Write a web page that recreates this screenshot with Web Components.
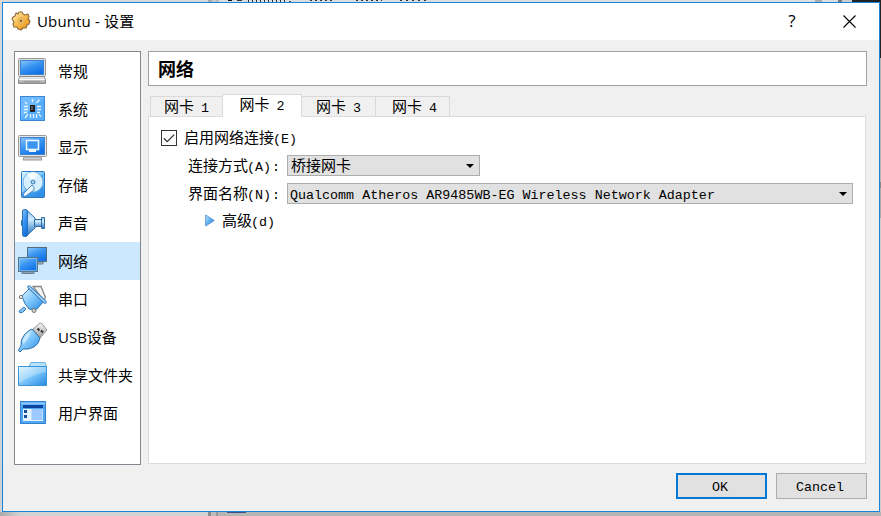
<!DOCTYPE html>
<html lang="zh-CN">
<head>
<meta charset="utf-8">
<title>Ubuntu - 设置</title>
<style>
  html, body { margin: 0; height: 100%; overflow: hidden; }
  body { font-family: "Liberation Mono", "Noto Sans CJK SC", monospace; color: #000; }
</style>
</head>
<body>

<template id="desk-top">
  <style>
    :host {
      display: flex;
      flex-direction: column;
      box-sizing: border-box;
      width: 881px;
      height: 516px;
      padding: 2px 1px 4px 2px;
      background:
        linear-gradient(#111, #111) 228px 0 / 4px 1px no-repeat,
        linear-gradient(#333, #333) 237px 0 / 5px 1px no-repeat,
        repeating-linear-gradient(90deg, #333 0 1px, transparent 1px 4px) 248px 0 / 38px 2px no-repeat,
        linear-gradient(#555, #555) 289px 1px / 2px 1px no-repeat,
        repeating-linear-gradient(90deg, #333 0 2px, transparent 2px 5px) 310px 0 / 25px 1px no-repeat,
        repeating-linear-gradient(90deg, #333 0 2px, transparent 2px 5px) 356px 0 / 26px 1px no-repeat,
        repeating-linear-gradient(90deg, #333 0 2px, transparent 2px 6px) 400px 0 / 27px 1px no-repeat,
        linear-gradient(90deg, #d8d8d8 208px, #aaa 208px 212px, #c8c8c8 212px 216px, #bbb 216px 219px, #dedede 219px 815px, #aaa 815px 822px, #ddd 822px 838px, #777 838px 842px, #ccc 842px 852px, #222 852px) 0 0 / 100% 2px no-repeat,
        linear-gradient(#45507f, #45507f) 227px 512px / 19px 1px no-repeat,
        linear-gradient(90deg, #aaa, #d2d2d2 20px 208px, #8c8c8c 208px 211px, #bbb 211px 216px, #999 216px 218px, #b4b4b4 218px) 0 512px / 100% 4px no-repeat,
        linear-gradient(#222 58px, #b5b5b5 58px 182px, #888 182px 188px, #aaa 188px 218px, #ccc 218px) 880px 0 / 1px 100% no-repeat,
        linear-gradient(#d8d8d8, #d0d0d0);
    }
  </style>
  <slot></slot>
</template>

<template id="settings-window">
  <style>
    :host {
      display: flex;
      flex-direction: column;
      box-sizing: border-box;
      height: 510px;
      border: 1px solid #1883d7;
      background: #f0f0f0;
    }
    header {
      display: flex;
      align-items: center;
      box-sizing: border-box;
      height: 37px;
      padding: 0 23px 1px 8px;
      background: #fff;
      font: 15px/20px "Open Sans", "Noto Sans CJK SC", sans-serif;
    }
    header svg { flex: none; }
    .title { margin-left: 6px; flex: 1; white-space: pre; letter-spacing: .15px; }
    .help { width: 10px; margin-right: 46px; font-size: 17px; text-align: center; }
    .body { display: flex; gap: 7px; padding: 11px 12px 0 11px; }
    .main { flex: 1; min-width: 0; display: flex; flex-direction: column; }
    footer { display: flex; justify-content: flex-end; gap: 9px; padding: 8px 12px 0; }
  </style>
  <header>
    <svg width="20" height="20" viewBox="0 0 20 20">
      <defs><linearGradient id="gear" x2="1" y2="1"><stop stop-color="#fff0b8"/><stop offset=".5" stop-color="#f8bb4c"/><stop offset="1" stop-color="#e08a08"/></linearGradient></defs>
      <path d="M8 1 11 1 12 3 14 4 17 3 18 6 17 8 19 10 18 13 16 14 15 17 12 17 10 19 7 18 6 16 3 16 2 13 3 11 1 8 2 6 4 5 5 2 7 3Z" fill="url(#gear)" stroke="#8f6a3c" stroke-width="1.1" stroke-linejoin="round"/>
      <circle cx="10" cy="10" r="3.2" fill="#f8c870" stroke="#e8ab4c"/>
      <circle cx="10" cy="10" r="1.4" fill="#8a6a3a"/>
    </svg>
    <span class="title"><slot name="title"></slot></span>
    <span class="help">?</span>
    <svg width="13" height="13" viewBox="0 0 13 13"><path d="M.5.5l12 12M12.5.5l-12 12" stroke="#000" stroke-width="1.1"/></svg>
  </header>
  <div class="body">
    <slot name="nav"></slot>
    <div class="main"><slot></slot></div>
  </div>
  <footer><slot name="buttons"></slot></footer>
</template>

<template id="nav-list">
  <style>
    :host {
      display: flex;
      flex-direction: column;
      flex: none;
      box-sizing: border-box;
      width: 127px;
      height: 414px;
      border: 1px solid #828790;
      background: #fff;
    }
  </style>
  <slot></slot>
</template>

<template id="nav-item">
  <style>
    :host {
      display: flex;
      align-items: center;
      gap: 10px;
      height: 38px;
      padding-left: 3px;
      font: 15px/20px "Open Sans", "Noto Sans CJK SC", sans-serif;
      white-space: nowrap;
    }
    :host([selected]) { background: #cce8ff; }
    svg { flex: none; }
  </style>
  <svg width="30" height="32" viewBox="0 0 30 32">
    <defs>
      <linearGradient id="blue" x2=".6" y2="1"><stop stop-color="#8cc9fa"/><stop offset=".5" stop-color="#3a95f2"/><stop offset="1" stop-color="#1272e6"/></linearGradient>
      <linearGradient id="soft" x2="1" y2="1"><stop stop-color="#e4f6ff"/><stop offset=".5" stop-color="#7cc5fa"/><stop offset="1" stop-color="#2488e4"/></linearGradient>
      <linearGradient id="cone" x2="0" y2="1"><stop stop-color="#8cc4f0"/><stop offset=".35" stop-color="#d3ecff"/><stop offset="1" stop-color="#1f6fc0"/></linearGradient>
      <linearGradient id="metal" x2="0" y2="1"><stop stop-color="#f6f6f6"/><stop offset="1" stop-color="#9b9b9b"/></linearGradient>
    </defs>
    <g id="art"></g>
  </svg>
  <span><slot></slot></span>
</template>

<template id="page-heading">
  <style>
    :host {
      display: flex;
      align-items: center;
      box-sizing: border-box;
      height: 35px;
      padding: 0 0 2px 9px;
      border: 1px solid #a0a0a0;
      background: #fff;
      font: bold 18px/24px "Noto Sans CJK SC", sans-serif;
    }
  </style>
  <slot></slot>
</template>

<template id="tab-panel">
  <style>
    :host { display: flex; flex-direction: column; margin: 8px 1px 0 0; }
    .tabs { display: flex; align-items: flex-end; height: 22px; padding-left: 2px; }
    .pane { box-sizing: border-box; height: 348px; border: 1px solid #dcdcdc; background: #fff; padding: 11px 12px; }
  </style>
  <div class="tabs"><slot name="tab"></slot></div>
  <div class="pane"><slot></slot></div>
</template>

<template id="tab-item">
  <style>
    :host {
      display: flex;
      justify-content: center;
      align-items: center;
      box-sizing: border-box;
      width: 75px;
      height: 20px;
      margin-right: -1px;
      border: 1px solid #d9d9d9;
      border-bottom: 0;
      background: #f0f0f0;
    }
    :host([first]) { width: 73px; }
    :host([selected]) {
      position: relative;
      width: 80px;
      height: 23px;
      margin-bottom: -1px;
      padding-bottom: 2px;
      background: #fff;
    }
    :host([last]) { padding-left: 4px; }
  </style>
  <mixed-text><slot></slot></mixed-text>
</template>

<!-- full-width glyphs at 15px next to 8px wide half-width glyphs -->
<template id="mixed-text">
  <style>
    :host {
      display: inline-flex;
      align-items: baseline;
      padding-top: 4px;
      white-space: pre;
      font-family: "Liberation Mono", "Noto Sans CJK SC", monospace;
      font-size: 15px;
      line-height: 20px;
    }
    ::slotted(b), ::slotted(i) { font-weight: normal; font-style: normal; font-size: 13.36px; margin-left: -1px; }
    ::slotted(i) { margin-left: 1px; }
  </style>
  <slot></slot>
</template>

<template id="check-box">
  <style>
    :host { display: flex; align-items: center; gap: 7px; height: 20px; }
    svg { flex: none; }
  </style>
  <svg width="16" height="16" viewBox="0 0 16 16">
    <rect x=".5" y=".5" width="15" height="15" fill="#fff" stroke="#333"/>
    <path d="M2.8 8.2l3.4 3.4 7-7" fill="none" stroke="#333" stroke-width="1.3"/>
  </svg>
  <slot></slot>
</template>

<template id="form-row">
  <style>
    :host { display: flex; align-items: center; height: 21px; margin: 7px 0; padding-left: 27px; }
    .label { display: flex; width: 99px; }
  </style>
  <div class="label"><slot name="label"></slot></div>
  <slot></slot>
</template>

<template id="combo-box">
  <style>
    :host {
      display: flex;
      align-items: center;
      justify-content: space-between;
      box-sizing: border-box;
      width: var(--combo-width, 193px);
      height: 21px;
      padding: 0 5px 0 3px;
      border: 1px solid #adadad;
      background: #e1e1e1;
    }
  </style>
  <slot></slot>
  <svg width="8" height="4" viewBox="0 0 8 4"><path d="M0 0h8L4 4z"/></svg>
</template>

<template id="expand-toggle">
  <style>
    :host { display: flex; align-items: center; gap: 7px; height: 19px; padding-left: 44px; }
  </style>
  <svg width="10" height="13" viewBox="0 0 10 13">
    <defs><linearGradient id="tri" x2="1" y2="1"><stop stop-color="#c9ecff"/><stop offset=".8" stop-color="#1d86e0"/></linearGradient></defs>
    <path d="M.7 1 9.2 6.5.7 12z" fill="url(#tri)" stroke="#5b9bdd"/>
  </svg>
  <slot></slot>
</template>

<template id="push-button">
  <style>
    :host {
      display: flex;
      align-items: center;
      justify-content: center;
      box-sizing: border-box;
      width: 91px;
      height: 26px;
      padding: 4px 3px 0 0;
      border: 1px solid #adadad;
      background: #e1e1e1;
      font-size: 13.36px;
      line-height: 18px;
    }
    :host([default]) { border: 2px solid #0078d7; }
  </style>
  <slot></slot>
</template>

<desk-top>
  <settings-window>
    <span slot="title">Ubuntu - 设置</span>

    <nav-list slot="nav">
      <nav-item icon="general">常规</nav-item>
      <nav-item icon="system">系统</nav-item>
      <nav-item icon="display">显示</nav-item>
      <nav-item icon="storage">存储</nav-item>
      <nav-item icon="audio">声音</nav-item>
      <nav-item icon="network" selected>网络</nav-item>
      <nav-item icon="serial">串口</nav-item>
      <nav-item icon="usb">USB设备</nav-item>
      <nav-item icon="folder">共享文件夹</nav-item>
      <nav-item icon="ui">用户界面</nav-item>
    </nav-list>

    <page-heading>网络</page-heading>
    <tab-panel>
      <tab-item slot="tab" first>网卡<b> 1</b></tab-item>
      <tab-item slot="tab" selected>网卡<b> 2</b></tab-item>
      <tab-item slot="tab">网卡<b> 3</b></tab-item>
      <tab-item slot="tab" last>网卡<b> 4</b></tab-item>

      <check-box><mixed-text>启用网络连接<b>(E)</b></mixed-text></check-box>
      <form-row>
        <mixed-text slot="label">连接方式<b>(A)</b><i>:</i></mixed-text>
        <combo-box><mixed-text>桥接网卡</mixed-text></combo-box>
      </form-row>
      <form-row>
        <mixed-text slot="label">界面名称<b>(N)</b><i>:</i></mixed-text>
        <combo-box style="--combo-width: 566px"><mixed-text><b>Qualcomm Atheros AR9485WB-EG Wireless Network Adapter</b></mixed-text></combo-box>
      </form-row>
      <expand-toggle><mixed-text>高级<b>(d)</b></mixed-text></expand-toggle>
    </tab-panel>

    <push-button slot="buttons" default>OK</push-button>
    <push-button slot="buttons">Cancel</push-button>
  </settings-window>
</desk-top>

<script>
  const icons = {
    general: `
      <rect x=".5" y="3.5" width="27" height="18" rx="1" fill="#ddd" stroke="#999"/>
      <rect x="2.5" y="5.5" width="23" height="14" fill="url(#blue)" stroke="#3b82d0"/>
      <path d="M2 21.5h24l1.500 3v4H.5v-4z" fill="url(#metal)" stroke="#8c8c8c"/>
      <path d="M1 24.5h26" stroke="#fff"/><path d="M6 26.5h16" stroke="#999"/>`,
    system: `
      <rect x="2.5" y="3.5" width="24" height="24" fill="#58adfa" stroke="#3c87d4"/>
      <path d="M3 4h23L3 25z" fill="#7fc4ff" opacity=".6"/>
      <rect x="12" y="12" width="5" height="7" fill="#222"/><rect x="13" y="13" width="2" height="4" fill="#555"/>
      <path d="M14.500 6v3M18.500 10l3-3M9 11 7 9M6 13.500h4M6 16.500h4M6 19.500h3M19 13.500h4M19 16.500h4M19 19.500h3M10 21l-3 4M12.500 21v4M15.500 21v4M18.500 21v4M21 21.500l2 2" stroke="#e4f5ff" stroke-width="1.3"/>`,
    display: `
      <rect x=".5" y="4.5" width="28" height="21" rx="1" fill="#e8e8e8" stroke="#999"/>
      <rect x="2.5" y="6.5" width="24" height="17" fill="url(#blue)" stroke="#3b82d0"/>
      <rect x="8.5" y="9.5" width="12" height="9" fill="#3a95f2" stroke="#e9f6ff" stroke-width="1.6"/>
      <path d="M11 19h7v2h-7z" fill="#e9f6ff"/>
      <path d="M6 26h17l1 3H5z" fill="#ccc" stroke="#999"/>`,
    storage: `
      <rect x="3.500" y="2.500" width="23" height="26" rx="1" fill="url(#soft)" stroke="#2d79c1"/>
      <path d="M4 24 25 5v23H4z" fill="#298ae4" opacity=".65"/>
      <circle cx="15" cy="13" r="10" fill="#d5efff" stroke="#75b4e5"/>
      <path d="M15 13 9 5q6-4 11 0z" fill="#fff" opacity=".8"/>
      <circle cx="15" cy="13" r="2" fill="#a4d2f2" stroke="#407fb6"/>
      <path d="M14 16q3 2 2 5l-8 6q-4 1-2-3z" fill="#eaf7ff" stroke="#4a88be"/>`,
    audio: `
      <rect x="3" y="13" width="3" height="6" rx="1" fill="#2773bc"/>
      <path d="M9 3.500 17 11v10l-8 7.500z" fill="url(#cone)" stroke="#2d72b3"/>
      <path d="M4.500 4q0-1.500 2.500-1.500t2.500 1.500v24q0 1.500-2.500 1.500T4.500 28z" fill="url(#blue)" stroke="#2d72b3"/>
      <path d="M16.500 12.500h7v-2h3v11h-3v-2h-7z" fill="url(#cone)" stroke="#326d9f"/>
      <path d="M23.500 12v8" stroke="#326d9f"/>`,
    network: `
      <rect x="9.500" y="2.500" width="19" height="14" fill="url(#blue)" stroke="#536c80"/>
      <path d="M13 17h12v2H13z" fill="#a9b9c5" stroke="#667f91"/>
      <rect x=".500" y="12.500" width="19" height="14" fill="url(#blue)" stroke="#597589"/>
      <path d="M1.500 13.500h17v12h-17z" fill="none" stroke="#8bc8f5" stroke-width=".7"/>
      <path d="M4 27h12v1.500H4z" fill="#b5c5d0" stroke="#667f91"/>`,
    serial: `
      <path d="M15 3.500h8l4.500 11-2 3z" fill="#f4f4f4" stroke="#888" stroke-width="1.300"/>
      <path d="m4 13 8-8 14 13-7 8q-4 1-8 0-5-5-7-13z" fill="url(#soft)" stroke="#3476b4"/>
      <path d="m11 4 16 15" stroke="#347bbd" stroke-width="3.500" stroke-linecap="round"/>
      <path d="m11 4 16 15" stroke="#a8d9fb" stroke-width="1.700" stroke-linecap="round"/>
      <path d="m6 24-5 4 1 2q3 0 6-4z" fill="#82c5f7" stroke="#3c7cb4"/>
      <circle cx="3" cy="14" r="1.700" fill="#eee" stroke="#777"/><circle cx="16" cy="27.500" r="2" fill="#ccc" stroke="#777"/>`,
    usb: `
      <path d="m15 8 7-6q2 0 3 2l4 5-7 8z" fill="url(#metal)" stroke="#999"/>
      <path d="m19.500 7.500 2 2m1.500 0 2 2" stroke="#333" stroke-width="2"/>
      <path d="m14 8 8 9q-1 6-6 9-6 3-11 2l-3 3q-2-1-1-3l2-3q-1-7 4-12 4-4 7-5z" fill="url(#soft)" stroke="#2e72ad"/>
      <path d="M13 10Q4 15 5 23q5-3 8-13z" fill="#e4f6ff" opacity=".65"/>`,
    folder: `
      <path d="M11 7.500 13 3.500h14l1.500 4v5H11z" fill="#b8e2fb" stroke="#6eafd9"/>
      <path d="M.500 7.500h28v19H.500z" fill="url(#soft)" stroke="#3b94d8"/>
      <path d="M1 8h27v5Q16 15 1 24z" fill="#eaf8ff" opacity=".3"/>`,
    ui: `
      <rect x="2.500" y="4.500" width="25" height="22" fill="#4fa6f2" stroke="#3781cc"/>
      <path d="M3 6.500h24" stroke="#87c8ff" stroke-width="2"/>
      <path d="M5 8h20v3H5z" fill="#0844a0"/>
      <path d="M5 12h20v12H5z" fill="#e6f4ff"/>
      <path d="M13.500 12h11v11h-11z" fill="#9cc9ff"/>
      <path d="M6 13h3v3H6zM6 18h3v3H6z" fill="#174c99"/>`
  };

  function define(name, setup) {
    customElements.define(name, class extends HTMLElement {
      constructor() {
        super();
        this.shadow = this.attachShadow({ mode: 'open' });
        this.shadow.appendChild(document.getElementById(name).content.cloneNode(true));
      }

      connectedCallback() {
        if (setup) {
          setup(this);
        }
      }
    });
  }

  define('mixed-text');
  define('desk-top');
  define('settings-window');
  define('nav-list');
  define('nav-item', (el) => {
    el.shadow.getElementById('art').innerHTML = icons[el.getAttribute('icon')];
  });
  define('page-heading');
  define('tab-panel');
  // slotted markup moves into the label so its half-width part can be styled
  define('tab-item', (el) => {
    el.shadow.querySelector('mixed-text').innerHTML = el.innerHTML;
  });
  define('check-box');
  define('form-row');
  define('combo-box');
  define('expand-toggle');
  define('push-button');
</script>
</body>
</html>
